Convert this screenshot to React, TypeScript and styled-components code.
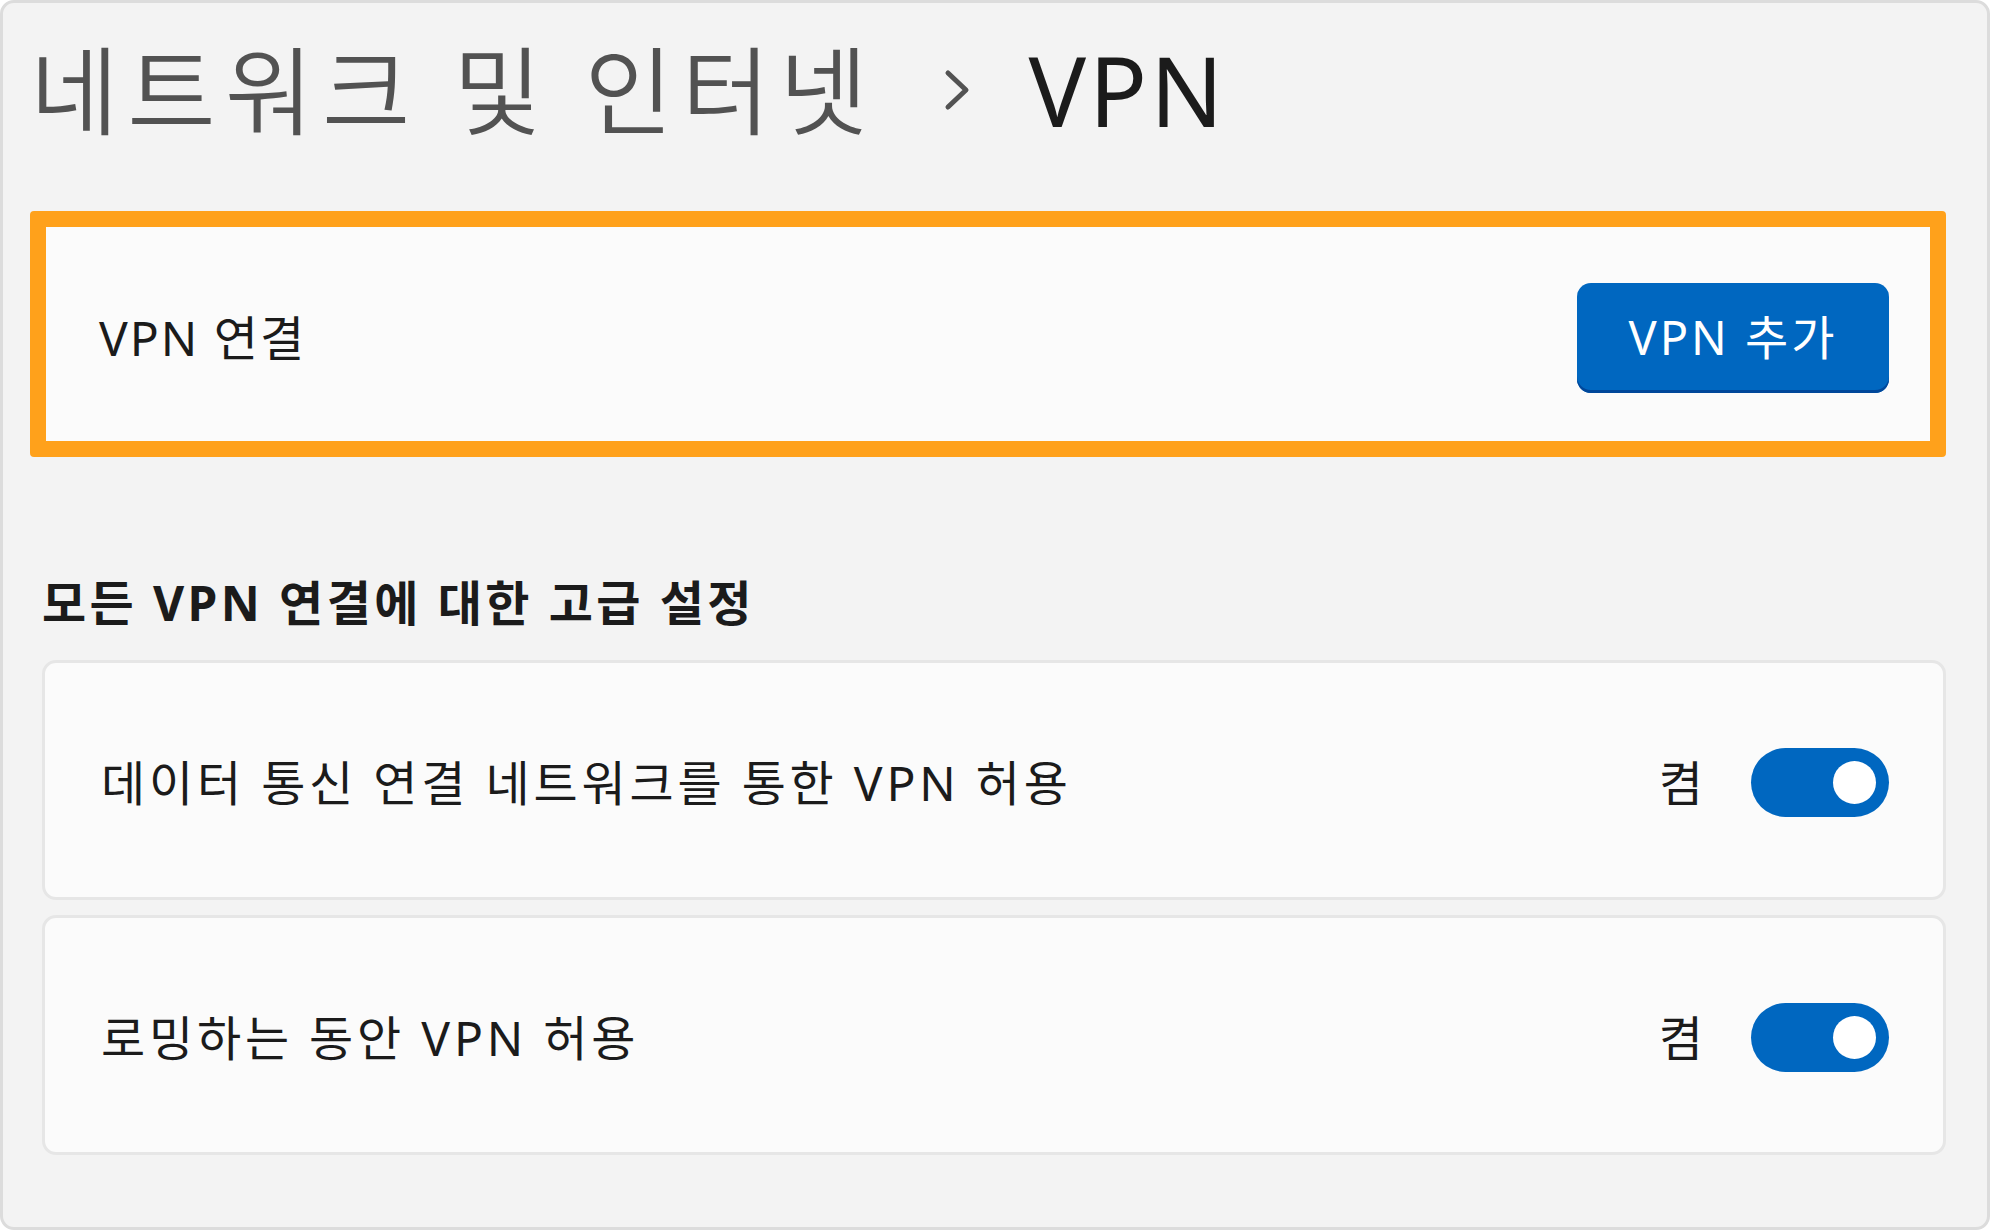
import React from "react";
import { styled, createGlobalStyle } from "styled-components";

const GlobalStyle = createGlobalStyle`
  html, body {
    margin: 0;
    padding: 0;
    background: #ffffff;
  }
  body {
    font-family: "Noto Sans", "Noto Sans CJK KR", sans-serif;
    color: #1b1b1b;
  }
`;

const Frame = styled.div`
  box-sizing: border-box;
  width: 1990px;
  height: 1230px;
  display: flex;
  flex-direction: column;
  padding: 29px 41px 0 27px;
  background: #f3f3f3;
  border: 3px solid #dcdcdc;
  border-radius: 14px;
`;

const Breadcrumb = styled.div`
  display: flex;
  align-items: center;
  height: 115px;
  font-size: 96px;
  line-height: 115px;
  white-space: nowrap;
`;

const Crumb = styled.span<{ $current?: boolean }>`
  color: ${(p) => (p.$current ? "#1b1b1b" : "#525252")};
  letter-spacing: ${(p) => (p.$current ? "3px" : "9px")};
  font-weight: ${(p) => (p.$current ? 400 : 350)};
`;

const Chevron = styled.svg`
  width: 26px;
  height: 42px;
  margin: 0 58px 0 68px;
  flex: none;
`;

const Highlight = styled.div`
  margin-top: 64px;
  border: 16px solid #ffa11b;
  border-radius: 4px;
`;

const Card = styled.div<{ $plain?: boolean }>`
  box-sizing: border-box;
  display: flex;
  align-items: center;
  justify-content: space-between;
  height: ${(p) => (p.$plain ? "214px" : "240px")};
  padding: ${(p) => (p.$plain ? "8px 41px 0 53px" : "5px 54px 0 56px")};
  margin-left: ${(p) => (p.$plain ? "0" : "12px")};
  background: #fbfbfb;
  border: ${(p) => (p.$plain ? "none" : "3px solid #e6e6e6")};
  border-radius: ${(p) => (p.$plain ? "0" : "14px")};
`;

const Label = styled.span<{ $tight?: boolean }>`
  font-size: 48px;
  line-height: 64px;
  letter-spacing: ${(p) => (p.$tight ? "2px" : "3.8px")};
  color: #1b1b1b;
`;

const Heading = styled.h2`
  margin: 114px 0 25px 12px;
  font-size: 48px;
  line-height: 64px;
  letter-spacing: 3.4px;
  font-weight: 700;
  color: #1b1b1b;
`;

const CardList = styled.div`
  display: flex;
  flex-direction: column;
  gap: 15px;
`;

const AccentButton = styled.button`
  box-sizing: border-box;
  width: 312px;
  height: 110px;
  padding: 0 0 3px;
  border: none;
  border-radius: 14px;
  background: #0067c0;
  box-shadow: inset 0 -3px 0 #00479a;
  color: #ffffff;
  font-family: inherit;
  font-size: 47px;
  line-height: 64px;
  letter-spacing: 3px;
`;

const ToggleGroup = styled.div`
  display: flex;
  align-items: center;
  gap: 46px;
`;

const ToggleTrack = styled.div<{ $on: boolean }>`
  box-sizing: border-box;
  width: 138px;
  height: 69px;
  padding: 0 13px;
  display: flex;
  align-items: center;
  justify-content: ${(p) => (p.$on ? "flex-end" : "flex-start")};
  background: ${(p) => (p.$on ? "#0067c0" : "transparent")};
  border-radius: 35px;
`;

const Knob = styled.div`
  width: 43px;
  height: 43px;
  border-radius: 50%;
  background: #ffffff;
`;

const Toggle: React.FC<{ on: boolean }> = ({ on }) => (
  <ToggleGroup>
    <Label $tight>{on ? "켬" : "끔"}</Label>
    <ToggleTrack $on={on}>
      <Knob />
    </ToggleTrack>
  </ToggleGroup>
);

const settings = [
  { label: "데이터 통신 연결 네트워크를 통한 VPN 허용", on: true },
  { label: "로밍하는 동안 VPN 허용", on: true },
];

export default function App() {
  return (
    <>
      <GlobalStyle />
      <Frame>
        <Breadcrumb>
          <Crumb>네트워크 및 인터넷</Crumb>
          <Chevron viewBox="0 0 26 42">
            <polyline
              points="4,4 22,21 4,38"
              fill="none"
              stroke="#525252"
              strokeWidth="5"
              strokeLinecap="round"
              strokeLinejoin="round"
            />
          </Chevron>
          <Crumb $current>VPN</Crumb>
        </Breadcrumb>

        <Highlight>
          <Card $plain>
            <Label $tight>VPN 연결</Label>
            <AccentButton>VPN 추가</AccentButton>
          </Card>
        </Highlight>

        <Heading>모든 VPN 연결에 대한 고급 설정</Heading>

        <CardList>
          {settings.map((s) => (
            <Card key={s.label}>
              <Label>{s.label}</Label>
              <Toggle on={s.on} />
            </Card>
          ))}
        </CardList>
      </Frame>
    </>
  );
}
